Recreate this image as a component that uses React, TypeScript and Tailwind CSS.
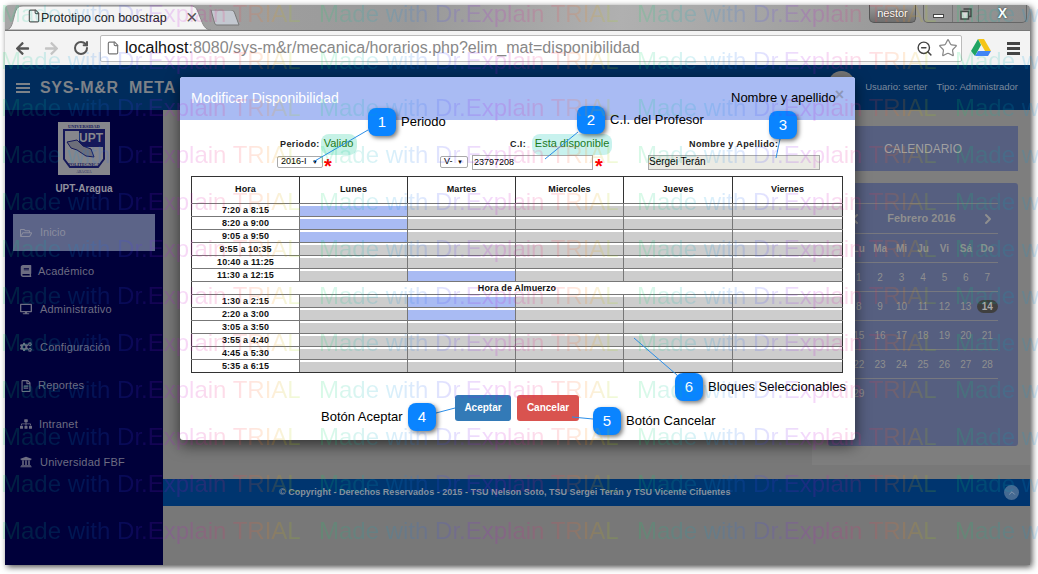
import {
  FaArrowLeft,
  FaArrowRight,
  FaBook,
  FaCogs,
  FaDesktop,
  FaRegFileAlt,
  FaRegFolderOpen,
  FaSitemap,
  FaUniversity,
} from "react-icons/fa"
import { FiChevronLeft, FiChevronRight, FiChevronUp } from "react-icons/fi"
import { LuFile, LuRotateCw, LuStar, LuZoomOut } from "react-icons/lu"

const menu = [
  { label: "Académico", icon: FaBook, gap: "gap-[6px]" },
  { label: "Administrativo", icon: FaDesktop, gap: "gap-[8px]" },
  { label: "Configuración", icon: FaCogs, gap: "gap-[8px]" },
  { label: "Reportes", icon: FaRegFileAlt, gap: "gap-[6px]" },
  { label: "Intranet", icon: FaSitemap, gap: "gap-[7px]" },
  { label: "Universidad FBF", icon: FaUniversity, gap: "gap-[8px]" },
]

const days = ["Lu", "Ma", "Mi", "Ju", "Vi", "Sá", "Do"]
const weeks = [
  ["1", "2", "3", "4", "5", "6", "7"],
  ["8", "9", "10", "11", "12", "13", "14"],
  ["15", "16", "17", "18", "19", "20", "21"],
  ["22", "23", "24", "25", "26", "27", "28"],
  ["29", "", "", "", "", "", ""],
]

const dayColumns = ["Lunes", "Martes", "Miercoles", "Jueves", "Viernes"]
// "blue" lists the day columns already taken in that block
const morning = [
  { hour: "7:20 a 8:15", blue: [0] },
  { hour: "8:20 a 9:00", blue: [0] },
  { hour: "9:05 a 9:50", blue: [0] },
  { hour: "9:55 a 10:35", blue: [] },
  { hour: "10:40 a 11:25", blue: [] },
  { hour: "11:30 a 12:15", blue: [1] },
]
const afternoon = [
  { hour: "1:30 a 2:15", blue: [1] },
  { hour: "2:20 a 3:00", blue: [1] },
  { hour: "3:05 a 3:50", blue: [] },
  { hour: "3:55 a 4:40", blue: [] },
  { hour: "4:45 a 5:30", blue: [] },
  { hour: "5:35 a 6:15", blue: [] },
]

const callouts = [
  { n: 1, box: "left-[368px] top-[108px]", label: "Periodo", text: "left-[401px] top-[114px]" },
  { n: 2, box: "left-[577px] top-[106px]", label: "C.I. del Profesor", text: "left-[610px] top-[112px]" },
  { n: 3, box: "left-[769px] top-[111px]", label: "Nombre y apellido", text: "left-[731px] top-[90px]" },
  { n: 4, box: "left-[408px] top-[403px]", label: "Botón Aceptar", text: "left-[321px] top-[409px]" },
  { n: 5, box: "left-[593px] top-[407px]", label: "Botón Cancelar", text: "left-[626px] top-[413px]" },
  { n: 6, box: "left-[675px] top-[373px]", label: "Bloques Seleccionables", text: "left-[708px] top-[379px]" },
]

const leaders = [
  [368, 130, 313, 162],
  [578, 132, 545, 159],
  [780, 139, 776, 158],
  [436, 413, 455, 408],
  [593, 419, 572, 417],
  [677, 375, 634, 338],
]

const watermarkRows = Array.from({ length: 12 }, (_, i) => i)
const watermarkCols = Array.from({ length: 4 }, (_, i) => i)

function HourRow({ hour, blue }: { hour: string; blue: number[] }) {
  return (
    <tr className="h-[13px]">
      <td className="border border-[#777] border-l-[#333] text-center p-0 leading-[11px]">{hour}</td>
      {dayColumns.map((day, i) => (
        <td key={day} className="border border-[#777] p-0 pt-[2px] h-[13px] last:border-r-[#333]">
          <div className={`h-[10px] ${blue.includes(i) ? "bg-[#a9bbf3]" : "bg-[#cdcdcd]"}`} />
        </td>
      ))}
    </tr>
  )
}

function Logo() {
  return (
    <svg width="52" height="53" viewBox="0 0 52 53">
      <rect width="52" height="53" fill="#85868c" />
      <path d="M6 8h40v29l-6 8H12l-6-8z" fill="#85868c" stroke="#15185a" strokeWidth="2" />
      <path d="M21 8h25v17H21z" fill="#15185a" />
      <path d="M9 20l10-2 6 6 8 3 3 8-8-1-9-6-6-2z" fill="#6d6e7a" stroke="#15185a" />
      <text x="33" y="20" fontSize="12" fontWeight="bold" textAnchor="middle" fill="#85868c" fontFamily="Liberation Sans">
        UPT
      </text>
      <text x="26" y="6" fontSize="4.5" fontWeight="bold" textAnchor="middle" fill="#15185a" fontFamily="Liberation Serif">
        UNIVERSIDAD
      </text>
      <text x="26" y="44" fontSize="4.5" fontWeight="bold" textAnchor="middle" fill="#15185a" fontFamily="Liberation Serif">
        POLITECNICA
      </text>
      <text x="26" y="51" fontSize="3.5" textAnchor="middle" fill="#2a2c5c" fontFamily="Liberation Serif">
        ARAGUA
      </text>
    </svg>
  )
}

function SelectBox({ value, width }: { value: string; width: string }) {
  return (
    <div className={`${width} h-[12px] border border-[#aaa] rounded-[2px] bg-white flex items-center justify-between pl-[3px] pr-[4px] text-[9px] text-black`}>
      <span>{value}</span>
      <span className="text-[6px]">▼</span>
    </div>
  )
}

export default function App() {
  return (
    <div className="relative w-[1038px] h-[574px] overflow-hidden bg-white pl-[5px] pt-[5px] font-['Liberation_Sans',sans-serif]">
      <div className="w-[1025px] h-[560px] flex flex-col rounded-t-[4px] overflow-hidden shadow-[2px_2px_6px_rgba(0,0,0,0.7)]">
        {/* Browser tab strip */}
        <div className="h-[25px] flex bg-[linear-gradient(100deg,#a6a6a6,#999_40%,#b0b0b0_60%,#8e8e8e)]">
          <div className="relative w-[206px] h-[25px]">
            <svg className="absolute inset-0" width="206" height="25" viewBox="0 0 206 25">
              <path d="M0 25C6 25 7 20 9 12C11 4 12 1 18 1H186C191 1 192 4 195 12C198 20 200 25 206 25Z" fill="#f4f4f4" stroke="#8a8a8a" />
            </svg>
            <LuFile className="absolute left-[22px] top-[4px] text-[#555]" size={14} />
            <span className="absolute left-[36px] top-[4px] text-[12.5px] text-[#222] whitespace-nowrap">Prototipo con boostrap</span>
            <span className="absolute left-[181px] top-[0px] text-[20px] leading-[25px] text-[#555]">×</span>
          </div>
          <svg className="mt-[5px] -ml-[2px]" width="32" height="16" viewBox="0 0 32 16">
            <path d="M2 0H22C24 0 25 1 26 4L30 15H8C6 15 6 14 5 11Z" fill="#c3c8d0" stroke="#777" />
          </svg>
          <div className="ml-auto mr-[3px] flex h-[18px] gap-[7px] text-white">
            <div className="w-[47px] rounded-b-[5px] border border-t-0 border-[#555] bg-[linear-gradient(#9a9a9a,#6e6e6e)] text-[11px] flex items-center justify-center [text-shadow:0_0_2px_#222]">nestor</div>
            <div className="w-[104px] rounded-b-[5px] border border-t-0 border-[#666] flex">
              <div className="w-[29px] border-r border-[#777] flex items-center justify-center">
                <div className="w-[11px] h-[4px] mt-[4px] bg-white border border-[#444]" />
              </div>
              <div className="w-[26px] border-r border-[#777] flex items-center justify-center">
                <svg width="12" height="12" viewBox="0 0 12 12">
                  <path d="M3.5 1h7.5v7.5H8.5" fill="none" stroke="#444" strokeWidth="1.5" />
                  <rect x="1" y="3.5" width="7.5" height="7.5" fill="#d8d8d8" stroke="#444" strokeWidth="1.5" />
                </svg>
              </div>
              <div className="flex-1 flex items-center justify-center text-[14px] font-bold text-white [text-shadow:0_0_2px_#222]">X</div>
            </div>
          </div>
        </div>

        {/* Browser toolbar */}
        <div className="h-[35px] shrink-0 flex items-center bg-[#f3f3f3] border-t border-[#777]">
          <FaArrowLeft className="ml-[10px] text-[#555]" size={15} />
          <FaArrowRight className="ml-[14px] text-[#c4c4c4]" size={15} />
          <LuRotateCw className="ml-[14px] text-[#555]" size={16} strokeWidth={3} />
          <div className="ml-[11px] w-[862px] h-[27px] flex items-center bg-white border border-[#bbb] rounded-[2px] pl-[5px]">
            <LuFile className="text-[#777] shrink-0" size={14} />
            <span className="ml-[5px] text-[16px] tracking-[0.03px] text-[#888] whitespace-nowrap">
              <span className="text-[#111]">localhost</span>:8080/sys-m&amp;r/mecanica/horarios.php?elim_mat=disponibilidad
            </span>
            <LuZoomOut className="ml-auto text-[#444]" size={17} />
            <LuStar className="ml-[5px] mr-[3px] text-[#888]" size={20} strokeWidth={1.5} />
          </div>
          <svg className="ml-[9px]" width="20" height="18" viewBox="0 0 20 18">
            <path d="M7 0h6l7 12h-6z" fill="#f5c518" />
            <path d="M7 0l3 6-6 11-4-5z" fill="#1fa463" />
            <path d="M4 17l3-5h13l-3 5z" fill="#4285f4" />
          </svg>
          <div className="ml-[16px] w-[13px] flex flex-col gap-[2px]">
            <div className="h-[3px] bg-[#444]" />
            <div className="h-[3px] bg-[#444]" />
            <div className="h-[3px] bg-[#444]" />
          </div>
        </div>

        {/* App header */}
        <div className="h-[45px] shrink-0 flex items-start pt-[14px] bg-[#002c5c]">
          <div className="ml-[11px] mt-[4px] w-[14px] flex flex-col gap-[2px]">
            <div className="h-[2px] bg-[#7d8288]" />
            <div className="h-[2px] bg-[#7d8288]" />
            <div className="h-[2px] bg-[#7d8288]" />
          </div>
          <span className="ml-[10px] text-[16px] leading-[18px] font-bold tracking-[0.7px] text-[#7d8288] whitespace-pre">SYS-M&amp;R  META</span>
          <div className="ml-auto mr-[12px] flex gap-[9px] text-[9.5px] leading-[14px] mt-[1px] text-[#7c8a9c]">
            <span>Usuario: serter</span>
            <span>Tipo: Administrador</span>
          </div>
        </div>

        <div className="flex-1 flex min-h-0">
          {/* Sidebar */}
          <div className="w-[158px] shrink-0 bg-[#00003a] flex flex-col items-start pt-[12px]">
            <div className="w-full flex justify-center">
              <Logo />
            </div>
            <div className="w-full mt-[7px] text-center text-[10px] leading-[14px] font-bold text-[#8f8f9c]">UPT-Aragua</div>
            <div className="mt-[18px] mb-[1px] ml-[8px] w-[142px] h-[37px] bg-[#5c6488] flex items-center gap-[8px] pl-[7px] text-[11px] text-[#8a8c9e]">
              <FaRegFolderOpen size={12} />
              <span>Inicio</span>
            </div>
            {menu.map((item) => (
              <div key={item.label} className={`ml-[15px] h-[38.2px] flex items-center ${item.gap} text-[11px] text-[#6d6d82]`}>
                <item.icon size={12} />
                <span className="tracking-[0.2px]">{item.label}</span>
              </div>
            ))}
          </div>

          {/* Main area */}
          <div className="flex-1 flex flex-col bg-[#787878]">
            <div className="h-[369px] shrink-0 flex justify-end">
              <div className="w-[218px] h-[355px] bg-[#7e7e7e] pl-[16px] pt-[16px]">
                <div className="w-[190px] h-[45px] bg-[#565f80] flex items-center justify-center text-[12px] text-[#a0a0a0]">CALENDARIO</div>
                <div className="mt-[12px] w-[190px] h-[263px] rounded-[3px] bg-[#565f80] pl-[20px] pt-[20px] text-[#8f8f8f]">
                  <div className="w-[150px] h-[30px] border-t border-[#77787f] flex items-center justify-between text-[#8f8f8f]">
                    <FiChevronLeft className="-ml-[1px]" size={16} strokeWidth={3} />
                    <span className="text-[11px] font-bold">Febrero 2016</span>
                    <FiChevronRight className="mr-[2px]" size={16} strokeWidth={3} />
                  </div>
                  <div className="w-[150px] h-[29px] border-t border-[#77787f] grid grid-cols-7 items-center text-center text-[10px] font-bold">
                    {days.map((day) => (
                      <span key={day}>{day}</span>
                    ))}
                  </div>
                  {weeks.map((week) => (
                    <div key={week[0]} className="w-[150px] h-[29px] border-t border-[#77787f] grid grid-cols-7 items-center text-center text-[10px]">
                      {week.map((day, i) => (
                        <span key={i} className={day === "14" ? "h-[13px] leading-[13px] rounded-full bg-[#3f3f3f] font-bold text-[#aaa]" : ""}>
                          {day}
                        </span>
                      ))}
                    </div>
                  ))}
                </div>
              </div>
            </div>
            <div className="h-[27px] shrink-0 bg-[#00356f] flex items-center pl-[116px] text-[9px] tracking-[0.03px] font-bold text-[#87929e]">
              <span>© Copyright - Derechos Reservados - 2015 - TSU Nelson Soto, TSU Sergei Terán y TSU Vicente Cifuentes</span>
              <div className="ml-auto mr-[11px] w-[15px] h-[15px] rounded-full bg-[#456a92] flex items-center justify-center text-[#8ea0b5]">
                <FiChevronUp size={10} />
              </div>
            </div>
          </div>
        </div>
      </div>

      {/* Avatar peeking out behind the dialog */}
      <div className="absolute left-[828px] top-[71px] w-[27px] h-[27px] rounded-full bg-[#777]" />

      {/* Dialog */}
      <div className="absolute left-[180px] top-[77px] w-[675px] h-[363px] bg-white rounded-[3px] shadow-[0_5px_15px_rgba(0,0,0,0.6)] flex flex-col">
        <div className="relative h-[43px] shrink-0 bg-[#a9bbf3] flex items-center pl-[11px] text-[14px] text-white rounded-t-[3px]">
          Modificar Disponibilidad
          <span className="absolute right-[11px] top-[6px] text-[16px] font-bold text-[#8d97b8]">×</span>
        </div>

        <div className="h-[56px] shrink-0 flex items-start pt-[14px] text-[9px]">
          <div className="ml-[97px] w-[100px]">
            <div className="h-[21px] flex items-center pl-[3px] font-bold text-[#222]">
              <span className="tracking-[0.4px]">Periodo:</span>
              <span className="ml-[1px] h-[21px] w-[36px] rounded-[8px] bg-[#c6f2e6] flex items-center pl-[3px] pb-[3px] text-[11px] font-normal text-[#1c7a1c]">Valido</span>
            </div>
            <div className="flex mt-[1px]">
              <SelectBox value="2016-I" width="w-[46px]" />
              <span className="ml-[1px] text-[20px] leading-[20px] font-bold text-[#f00]">*</span>
            </div>
          </div>
          <div className="ml-[63px] w-[175px]">
            <div className="h-[21px] flex items-center pl-[70px] font-bold text-[#222]">
              <span className="tracking-[0.4px]">C.I:</span>
              <span className="ml-[6px] h-[21px] w-[80px] rounded-[8px] bg-[#c8f2ee] flex items-center justify-center pb-[3px] text-[11px] font-normal text-[#1c7a1c] whitespace-nowrap">Esta disponible</span>
            </div>
            <div className="flex items-start">
              <div className="mt-[1px]">
                <SelectBox value="V-" width="w-[28px]" />
              </div>
              <input readOnly value="23797208" className="ml-[4px] w-[121px] h-[15px] border border-[#aaa] pl-[1px] pb-[2px] text-[9px] text-black outline-none" />
              <span className="ml-[2px] mt-[1px] text-[20px] leading-[20px] font-bold text-[#f00]">*</span>
            </div>
          </div>
          <div className="ml-[33px] w-[172px]">
            <div className="h-[21px] flex items-center pl-[41px] font-bold text-[#222] tracking-[0.4px]">Nombre y Apellido:</div>
            <input readOnly value="Sergei Terán" className="block w-[172px] h-[15px] border border-[#aaa] bg-[#ebebe4] pb-[2px] text-[10px] text-black outline-none" />
          </div>
        </div>

        <div className="ml-[11px]">
          <table className="w-[651px] table-fixed border-collapse text-[9px] font-bold text-[#111] tracking-[0.1px]">
            <colgroup>
              <col className="w-[108px]" />
              <col className="w-[108px]" />
              <col className="w-[108px]" />
              <col className="w-[108px]" />
              <col className="w-[109px]" />
              <col className="w-[110px]" />
            </colgroup>
            <thead>
              <tr className="h-[27px]">
                <th className="border border-[#333] border-b-[#777] p-0 font-bold">Hora</th>
                {dayColumns.map((day) => (
                  <th key={day} className="border border-[#333] border-b-[#777] p-0 font-bold">{day}</th>
                ))}
              </tr>
            </thead>
            <tbody className="[&>tr:last-child>td]:border-b-[#333]">
              {morning.map((row) => (
                <HourRow key={row.hour} hour={row.hour} blue={row.blue} />
              ))}
              <tr className="h-[13px]">
                <td colSpan={6} className="border border-[#777] border-x-[#333] text-center p-0 leading-[11px]">Hora de Almuerzo</td>
              </tr>
              {afternoon.map((row) => (
                <HourRow key={row.hour} hour={row.hour} blue={row.blue} />
              ))}
            </tbody>
          </table>
        </div>

        <div className="mt-[22px] ml-[275px] flex gap-[6px] text-[10px] font-bold text-white">
          <div className="w-[56px] h-[26px] rounded-[3px] bg-[#337ab7] flex items-center justify-center pb-[2px]">Aceptar</div>
          <div className="w-[62px] h-[26px] rounded-[3px] bg-[#d9534f] flex items-center justify-center pb-[2px]">Cancelar</div>
        </div>
      </div>

      {/* Dr.Explain callouts */}
      <svg className="absolute inset-0 pointer-events-none" width="1038" height="574" viewBox="0 0 1038 574">
        {leaders.map(([x1, y1, x2, y2]) => (
          <line key={x1} x1={x1} y1={y1} x2={x2} y2={y2} stroke="#2b8ee8" strokeWidth="1" />
        ))}
      </svg>
      {callouts.map((c) => (
        <div key={c.n}>
          <div className={`absolute ${c.box} w-[28px] h-[28px] rounded-[8px] bg-[#0a84ff] shadow-[2px_2px_4px_rgba(0,0,0,0.5)] flex items-center justify-center text-[15px] text-white`}>
            {c.n}
          </div>
          <span className={`absolute ${c.text} text-[13px] leading-[16px] text-black whitespace-nowrap`}>{c.label}</span>
        </div>
      ))}

      {/* Trial watermark */}
      <div className="absolute inset-0 pointer-events-none opacity-15">
        {watermarkRows.map((row) => (
          <div key={row} className="h-[47px] flex pl-[1px]">
            {watermarkCols.map((col) => (
              <span
                key={col}
                className="w-[318px] shrink-0 h-[28px] text-[24px] leading-[28px] whitespace-nowrap text-transparent bg-clip-text bg-[linear-gradient(90deg,#00e060_0%,#00a0e0_22%,#4040ff_40%,#c000e0_55%,#ff2060_72%,#ff9000_85%,#a0e000_93%)]"
              >
                Made with Dr.Explain TRIAL
              </span>
            ))}
          </div>
        ))}
      </div>
    </div>
  )
}
